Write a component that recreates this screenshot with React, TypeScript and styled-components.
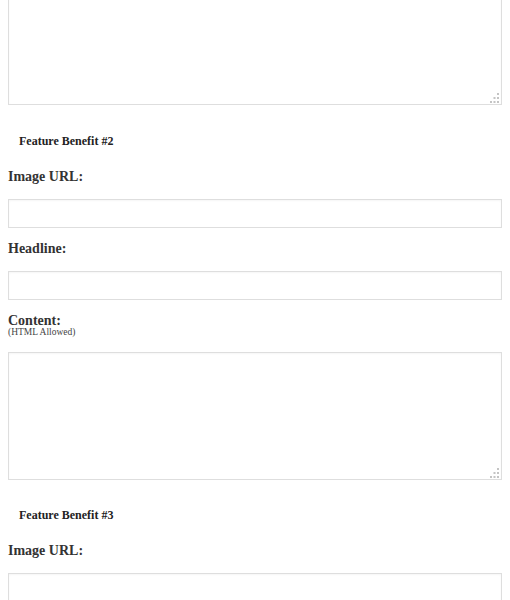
import React from "react";
import styled, { createGlobalStyle } from "styled-components";

const Global = createGlobalStyle`
  html, body { background: #fff; }
  body {
    margin: 0;
    padding: 0 8px;
    font-family: "Liberation Serif", "Times New Roman", serif;
    color: #2b2b2b;
    overflow: hidden;
  }
`;

const Page = styled.div`
  display: flex;
  flex-direction: column;
`;

const Section = styled.section`
  display: flex;
  flex-direction: column;
  gap: 11px;
`;

const SectionTitle = styled.h4<{ $gap: number }>`
  margin: ${(p) => p.$gap}px 0 7px;
  padding-left: 11px;
  font-size: 12px;
  line-height: 16px;
  font-weight: bold;
  color: #222;
`;

const Field = styled.div`
  display: flex;
  flex-direction: column;
`;

const Label = styled.label<{ $tight?: boolean }>`
  display: block;
  font-size: 14px;
  font-weight: bold;
  line-height: ${(p) => (p.$tight ? "14px" : "20px")};
  margin-bottom: ${(p) => (p.$tight ? "15px" : "12px")};
  margin-top: ${(p) => (p.$tight ? "3px" : "0")};
  color: #333;
`;

const Note = styled.small`
  display: block;
  font-size: 9.5px;
  font-weight: normal;
  line-height: 9px;
  color: #444;
`;

const Input = styled.input`
  box-sizing: border-box;
  width: 100%;
  height: 29px;
  margin: 0;
  border: 1px solid #dedede;
  box-shadow: inset 0 1px 2px rgba(0, 0, 0, 0.04);
  background: #fff;
  outline: none;
`;

const AreaWrap = styled.div<{ $first?: boolean }>`
  position: relative;
  margin-top: ${(p) => (p.$first ? "-23px" : "0")};
`;

const TextArea = styled.textarea`
  box-sizing: border-box;
  display: block;
  width: 100%;
  height: 128px;
  margin: 0;
  border: 1px solid #dedede;
  box-shadow: inset 0 1px 2px rgba(0, 0, 0, 0.04);
  background: #fff;
  resize: none;
  outline: none;
`;

const Grip = styled.svg`
  position: absolute;
  right: 2px;
  bottom: 2px;
  width: 11px;
  height: 11px;
  pointer-events: none;
`;

function Area({ first }: { first?: boolean }) {
  return (
    <AreaWrap $first={first}>
      <TextArea />
      <Grip viewBox="0 0 11 11">
        <g fill="#c4c4c4">
          <rect x="8" y="1" width="2" height="2" />
          <rect x="8" y="5" width="2" height="2" />
          <rect x="8" y="9" width="2" height="2" />
          <rect x="4.5" y="5" width="2" height="2" />
          <rect x="4.5" y="9" width="2" height="2" />
          <rect x="1" y="9" width="2" height="2" />
        </g>
      </Grip>
    </AreaWrap>
  );
}

function Benefit({ n }: { n: number }) {
  return (
    <Section>
      <SectionTitle $gap={n === 2 ? 28 : 27}>Feature Benefit #{n}</SectionTitle>
      <Field>
        <Label>Image URL:</Label>
        <Input type="text" />
      </Field>
      {n < 3 && (
        <>
          <Field>
            <Label>Headline:</Label>
            <Input type="text" />
          </Field>
          <Field>
            <Label $tight>
              Content:
              <Note>(HTML Allowed)</Note>
            </Label>
            <Area />
          </Field>
        </>
      )}
    </Section>
  );
}

export default function App() {
  return (
    <Page>
      <Global />
      <Area first />
      <Benefit n={2} />
      <Benefit n={3} />
    </Page>
  );
}
